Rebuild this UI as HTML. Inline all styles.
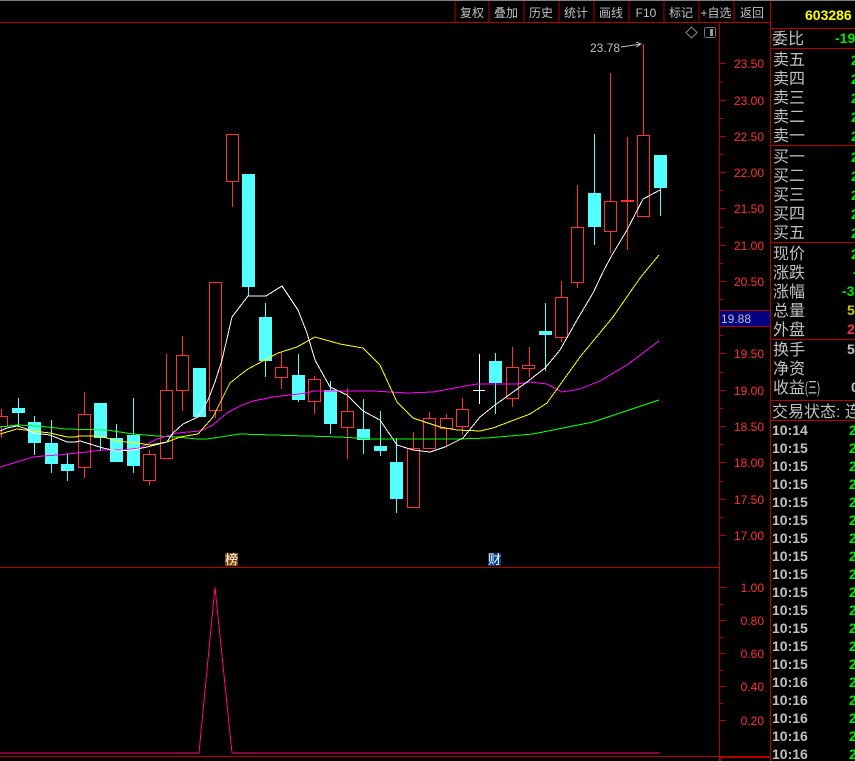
<!DOCTYPE html>
<html><head><meta charset="utf-8"><style>
html,body{margin:0;padding:0;background:#000;width:855px;height:761px;overflow:hidden}
svg{display:block;position:absolute;left:0;top:0}
text{font-family:"Liberation Sans","WenQuanYi Zen Hei","Noto Sans CJK SC",sans-serif}
.tb text{font-size:12px;fill:#c0c0c0;text-anchor:middle}
.ax text{font-size:12px;fill:#ff3232;text-anchor:end}
.lb text{font-size:16px;fill:#c0c0c0}
.tm text{font-size:14px;font-weight:bold;fill:#c0c0c0}
.gr text{font-size:14px;font-weight:bold;fill:#00e600}
</style></head><body>
<svg width="855" height="761" viewBox="0 0 855 761" xmlns="http://www.w3.org/2000/svg">
<rect width="855" height="761" fill="#000"/>
<rect width="855" height="1" fill="#808080"/>
<g shape-rendering="crispEdges">
<!-- frame lines -->
<path fill="none" stroke="#b40000" d="M0 22.5H770.5M455 1V22M489 1V22M524 1V22M559 1V22M594 1V22M629 1V22M664 1V22M699 1V22M734 1V22M719.5 22V761M770.5 1V761M0 567.5H719M0 756.5H719M771 28.5H855M771 48.5H855M771 145.5H855M771 242.5H855M771 339.5H855M771 400.5H855M771 420.5H855"/>
<rect x="719" y="756" width="52" height="2" fill="#b40000"/>
<rect x="719" y="758" width="2" height="3" fill="#b40000"/>
<!-- axis ticks -->
<path fill="none" stroke="#b40000" d="M720 63.5h6M720 82h3M720 100.5h6M720 118.5h3M720 136.5h6M720 154.5h3M720 172.5h6M720 190.5h3M720 208.5h6M720 227.5h3M720 245.5h6M720 263.5h3M720 281.5h6M720 299.5h3M720 335.5h3M720 353.5h6M720 372.5h3M720 390.5h6M720 408.5h3M720 426.5h6M720 444.5h3M720 462.5h6M720 481.5h3M720 499.5h6M720 517.5h3M720 535.5h6M720 587.5h6M720 604.5h3M720 620.5h6M720 637.5h3M720 653.5h6M720 670.5h3M720 686.5h6M720 703.5h3M720 720.5h6"/>
<!-- price marker -->
<rect x="720" y="311" width="50" height="15" fill="#000080"/>
<path fill="none" stroke="#b40000" d="M720 310.5H770M720 326.5H770"/>

<!-- red candles -->
<path fill="none" stroke="#ff3232" d="M1.5 409V416M1.5 426V438M-5 416.5H7.5V426.5H-5Z
M84.5 392V414M84.5 467V478M78.5 414.5H90.5V467.5H78.5Z
M149.5 450V454M149.5 480V485M143.5 454.5H155.5V480.5H143.5Z
M166.5 354V390M160.5 390.5H172.5V458.5H160.5Z
M182.5 336V355M182.5 390V411M176.5 355.5H188.5V390.5H176.5Z
M215.5 410V418M209.5 282.5H221.5V410.5H209.5Z
M232.5 182V207M226.5 134.5H238.5V181.5H226.5Z
M281.5 352V367M281.5 377V389M275.5 367.5H287.5V377.5H275.5Z
M314.5 376V379M314.5 401V414M308.5 379.5H320.5V401.5H308.5Z
M347.5 388V411M347.5 427V459M341.5 411.5H353.5V427.5H341.5Z
M413.5 432V448M407.5 448.5H419.5V507.5H407.5Z
M429.5 412V418M423.5 418.5H435.5V448.5H423.5Z
M446.5 414V418M446.5 428V447M440.5 418.5H452.5V428.5H440.5Z
M462.5 398V409M462.5 426V435M456.5 409.5H468.5V426.5H456.5Z
M512.5 347V367M512.5 398V407M506.5 367.5H518.5V398.5H506.5Z
M529.5 347V365M529.5 368V377M522.5 365.5H534.5V368.5H522.5Z
M561.5 281V297M561.5 337V342M555.5 297.5H567.5V337.5H555.5Z
M577.5 185V227M577.5 282V288M571.5 227.5H583.5V282.5H571.5Z
M610.5 73V201M610.5 231V253M604.5 201.5H616.5V231.5H604.5Z
M627.5 137V250
M643.5 44V135M637.5 135.5H649.5V216.5H637.5Z"/>
<rect x="621" y="200" width="13" height="2" fill="#ff3232"/>
<!-- white doji -->
<path fill="none" stroke="#fff" d="M479.5 354V404M473 390.5H485"/>
<!-- cyan candles -->
<path fill="none" stroke="#54ffff" d="M18.5 398V426M34.5 416V455M51.5 420V473M67.5 453V481M100.5 438V450M116.5 424V438M133.5 398V473M248.5 287V296M265.5 303V377M298.5 354V402M330.5 381V434M363.5 399V454M380.5 411V456M396.5 438V513M495.5 353V414M545.5 303V371M594.5 134V245M660.5 188V216"/>
<path fill="#54ffff" d="M12 408h13v5h-13zM28 422h13v21h-13zM45 443h13v21h-13zM61 464h13v7h-13zM94 403h13v35h-13zM110 438h13v24h-13zM127 435h13v31h-13zM193 368h13v49h-13zM242 174h13v113h-13zM259 317h13v44h-13zM292 375h13v25h-13zM324 390h13v34h-13zM357 429h13v11h-13zM374 446h13v5h-13zM390 462h13v37h-13zM489 361h13v22h-13zM539 331h13v4h-13zM588 193h13v34h-13zM654 155h13v33h-13z"/>

<!-- MA lines -->
<polyline fill="none" stroke="#00ff00" points="0,427 17,425 37,426 57,428 65,429 107,430 133,434 157,436 177,437 197,439 207,439 240,434 273,435 340,437 373,439 440,439 460,439 487,438 533,434 593,422 659,400"/>
<polyline fill="none" stroke="#ff00ff" points="0,467 17,462 33,457 43,456 58,455 77,453 103,450 123,450 140,448 157,439 177,433 200,431 213,425 227,413 240,406 253,401 273,397 307,393 313,391 373,391 407,393 433,392 460,387 477,384 517,384 530,382 547,384 562,392 580,389 600,381 627,365 659,341"/>
<polyline fill="none" stroke="#ffff00" points="0,434 17,429 33,431 50,433 67,437 75,437 80,436 100,436 117,441 137,443 150,445 167,442 180,437 198,434 213,417 230,383 240,375 248,369 278,353 297,347 315,337 340,344 363,348 380,365 397,402 413,418 440,427 457,430 480,431 493,428 530,414 547,403 580,357 613,317 640,278 659,255"/>
<polyline fill="none" stroke="#ffffff" points="0,431 7,428 17,426 27,429 33,433 50,435 67,442 75,442 80,441 90,444 103,448 117,451 133,450 147,447 167,442 173,433 183,424 198,417 208,400 215,382 222,360 232,317 248,296 257,296 266,296 282,286 298,310 307,333 315,360 330,387 347,395 363,411 380,420 397,445 413,450 430,452 445,447 463,438 480,417 495,405 527,382 545,368 560,350 577,320 593,293 604,270 612,255 627,230 643,199 660,190"/>

<!-- sub chart -->
<polyline fill="none" stroke="#ff0080" points="0,753 199,753 215,587 232,753 660,753"/>

<!-- arrow -->
<path fill="none" stroke="#c0c0c0" d="M621 47L641 44M636 42L641 44L636 47"/>
<!-- icons -->
<path fill="none" stroke="#808080" d="M691.5 27L697 32.5L691.5 38L686 32.5Z"/>
<rect x="704.5" y="27.5" width="11" height="10" rx="2" fill="none" stroke="#707070"/>
<rect x="710" y="29" width="3" height="7" fill="#999"/>
<!-- markers -->
<rect x="225" y="553" width="13" height="13" fill="#804000"/>
<rect x="488" y="553" width="13" height="13" fill="#004080"/>
</g>

<text x="225" y="564" font-size="13" fill="#fff">榜</text>
<text x="488" y="564" font-size="13" fill="#fff">财</text>
<text x="590" y="52" font-size="12" fill="#c0c0c0">23.78</text>

<g class="tb">
<text x="472" y="17">复权</text><text x="506" y="17">叠加</text><text x="541" y="17">历史</text><text x="576" y="17">统计</text><text x="611" y="17">画线</text><text x="646" y="17">F10</text><text x="681" y="17">标记</text><text x="716" y="17">+自选</text><text x="752" y="17">返回</text>
</g>

<g class="ax">
<text x="764" y="68">23.50</text><text x="764" y="105">23.00</text><text x="764" y="141">22.50</text><text x="764" y="177">22.00</text><text x="764" y="213">21.50</text><text x="764" y="250">21.00</text><text x="764" y="286">20.50</text><text x="764" y="358">19.50</text><text x="764" y="395">19.00</text><text x="764" y="431">18.50</text><text x="764" y="467">18.00</text><text x="764" y="504">17.50</text><text x="764" y="540">17.00</text>
<text x="764" y="592">1.00</text><text x="764" y="625">0.80</text><text x="764" y="658">0.60</text><text x="764" y="691">0.40</text><text x="764" y="725">0.20</text>
</g>
<text x="721" y="323" font-size="12" fill="#c0c0c0">19.88</text>

<text x="805" y="20" font-size="14" font-weight="bold" fill="#ffff00">603286</text>

<g class="lb">
<text x="772" y="44">委比</text>
<text x="773" y="65">卖五</text><text x="773" y="84">卖四</text><text x="773" y="103">卖三</text><text x="773" y="122">卖二</text><text x="773" y="141">卖一</text>
<text x="773" y="162">买一</text><text x="773" y="181">买二</text><text x="773" y="200">买三</text><text x="773" y="219">买四</text><text x="773" y="238">买五</text>
<text x="773" y="259">现价</text><text x="773" y="278">涨跌</text><text x="773" y="297">涨幅</text><text x="773" y="316">总量</text><text x="773" y="335">外盘</text>
<text x="773" y="355">换手</text><text x="773" y="374">净资</text><text x="773" y="393">收益</text><text x="805" y="393" textLength="15" lengthAdjust="spacingAndGlyphs">(三)</text>
<text x="772" y="417">交易状态:</text><text x="845" y="417">连</text>
</g>

<g font-size="14" font-weight="bold">
<text x="835" y="43" fill="#00e600">-19</text>
<g fill="#00e600">
<text x="851" y="65">2</text><text x="851" y="84">2</text><text x="851" y="103">2</text><text x="851" y="122">2</text><text x="851" y="141">2</text>
<text x="851" y="162">2</text><text x="851" y="181">2</text><text x="851" y="200">2</text><text x="851" y="219">2</text><text x="851" y="238">2</text>
<text x="851" y="259">2</text><text x="853" y="277">-</text><text x="842" y="296">-3</text>
</g>
<text x="847" y="315" fill="#c8c800">5</text>
<text x="847" y="334" fill="#ff3232">2</text>
<text x="847" y="354" fill="#c0c0c0">5</text>
<text x="851" y="392" fill="#c0c0c0">0</text>
</g>

<g class="tm">
<text x="772" y="435">10:14</text><text x="772" y="453">10:15</text><text x="772" y="471">10:15</text><text x="772" y="489">10:15</text><text x="772" y="507">10:15</text><text x="772" y="525">10:15</text><text x="772" y="543">10:15</text><text x="772" y="561">10:15</text><text x="772" y="579">10:15</text><text x="772" y="597">10:15</text><text x="772" y="615">10:15</text><text x="772" y="633">10:15</text><text x="772" y="651">10:15</text><text x="772" y="669">10:15</text><text x="772" y="687">10:16</text><text x="772" y="705">10:16</text><text x="772" y="723">10:16</text><text x="772" y="741">10:16</text><text x="772" y="759">10:16</text>
</g>
<g class="gr">
<text x="849" y="435">2</text><text x="849" y="453">2</text><text x="849" y="471">2</text><text x="849" y="489">2</text><text x="849" y="507">2</text><text x="849" y="525">2</text><text x="849" y="543">2</text><text x="849" y="561">2</text><text x="849" y="579">2</text><text x="849" y="597">2</text><text x="849" y="615">2</text><text x="849" y="633">2</text><text x="849" y="651">2</text><text x="849" y="669">2</text><text x="849" y="687">2</text><text x="849" y="705">2</text><text x="849" y="723">2</text><text x="849" y="741">2</text><text x="849" y="759">2</text>
</g>
</svg>
</body></html>
